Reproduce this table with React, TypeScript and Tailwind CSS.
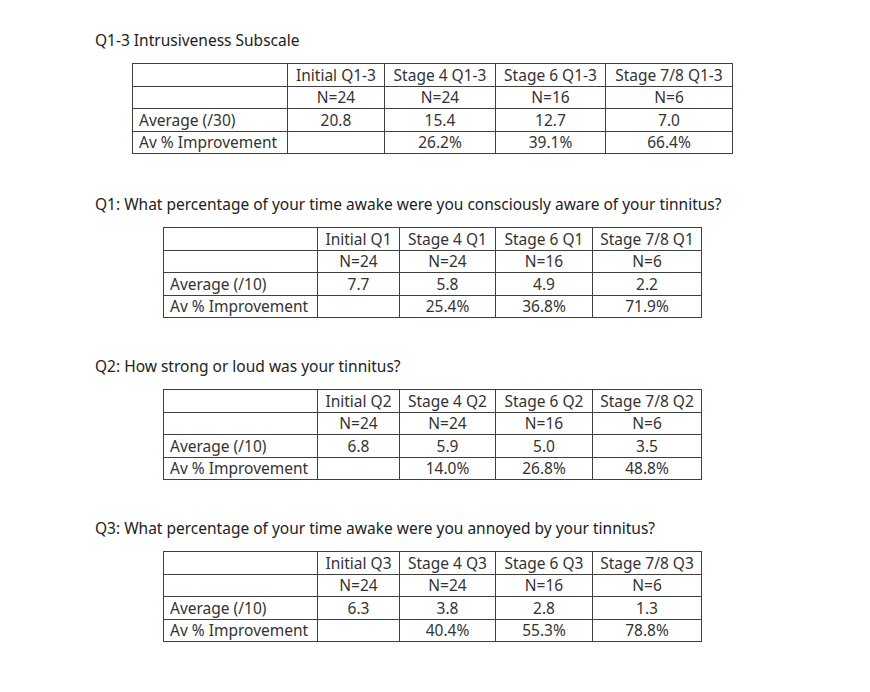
const font = { fontFamily: '"Noto Sans", "Open Sans", sans-serif' };

type TableData = {
  widths: number[];
  heads: string[];
  ns: string[];
  avgLabel: string;
  avgs: string[];
  imps: string[];
};

const tables: { title: string; indent: string; data: TableData }[] = [
  {
    title: "Q1-3 Intrusiveness Subscale",
    indent: "ml-[37px]",
    data: {
      widths: [155, 97, 111, 110, 127],
      heads: ["Initial Q1-3", "Stage 4 Q1-3", "Stage 6 Q1-3", "Stage 7/8 Q1-3"],
      ns: ["N=24", "N=24", "N=16", "N=6"],
      avgLabel: "Average (/30)",
      avgs: ["20.8", "15.4", "12.7", "7.0"],
      imps: ["", "26.2%", "39.1%", "66.4%"],
    },
  },
  {
    title: "Q1: What percentage of your time awake were you consciously aware of your tinnitus?",
    indent: "ml-[68px]",
    data: {
      widths: [154, 82, 96, 97, 109],
      heads: ["Initial Q1", "Stage 4 Q1", "Stage 6 Q1", "Stage 7/8 Q1"],
      ns: ["N=24", "N=24", "N=16", "N=6"],
      avgLabel: "Average (/10)",
      avgs: ["7.7", "5.8", "4.9", "2.2"],
      imps: ["", "25.4%", "36.8%", "71.9%"],
    },
  },
  {
    title: "Q2: How strong or loud was your tinnitus?",
    indent: "ml-[68px]",
    data: {
      widths: [154, 82, 96, 97, 109],
      heads: ["Initial Q2", "Stage 4 Q2", "Stage 6 Q2", "Stage 7/8 Q2"],
      ns: ["N=24", "N=24", "N=16", "N=6"],
      avgLabel: "Average (/10)",
      avgs: ["6.8", "5.9", "5.0", "3.5"],
      imps: ["", "14.0%", "26.8%", "48.8%"],
    },
  },
  {
    title: "Q3: What percentage of your time awake were you annoyed by your tinnitus?",
    indent: "ml-[68px]",
    data: {
      widths: [154, 82, 96, 97, 109],
      heads: ["Initial Q3", "Stage 4 Q3", "Stage 6 Q3", "Stage 7/8 Q3"],
      ns: ["N=24", "N=24", "N=16", "N=6"],
      avgLabel: "Average (/10)",
      avgs: ["6.3", "3.8", "2.8", "1.3"],
      imps: ["", "40.4%", "55.3%", "78.8%"],
    },
  },
];

const cell = "border border-[#404040] px-[6px] h-[22.5px] leading-[20px] whitespace-nowrap";

const Row = ({ label, values }: { label: string; values: string[] }) => (
  <tr>
    <td className={`${cell} text-left`}>{label}</td>
    {values.map((v, i) => (
      <td key={i} className={`${cell} text-center`}>{v}</td>
    ))}
  </tr>
);

const DataTable = ({ data }: { data: TableData }) => (
  <table className="table-fixed border-collapse text-[15.5px] text-[#333]">
    <colgroup>
      {data.widths.map((w, i) => (
        <col key={i} style={{ width: w }} />
      ))}
    </colgroup>
    <tbody>
      <Row label="" values={data.heads} />
      <Row label="" values={data.ns} />
      <Row label={data.avgLabel} values={data.avgs} />
      <Row label="Av % Improvement" values={data.imps} />
    </tbody>
  </table>
);

export default function App() {
  return (
    <div className="w-[870px] h-[692px] bg-white pl-[95px] pt-[30px]" style={font}>
      {tables.map((t, i) => (
        <section key={i} className={i === 0 ? "" : i === 1 ? "mt-[40px]" : "mt-[38px]"}>
          <h2 className="text-[15.5px] leading-[20px] text-[#222]">{t.title}</h2>
          <div className={`${t.indent} mt-[13px]`}>
            <DataTable data={t.data} />
          </div>
        </section>
      ))}
    </div>
  );
}
